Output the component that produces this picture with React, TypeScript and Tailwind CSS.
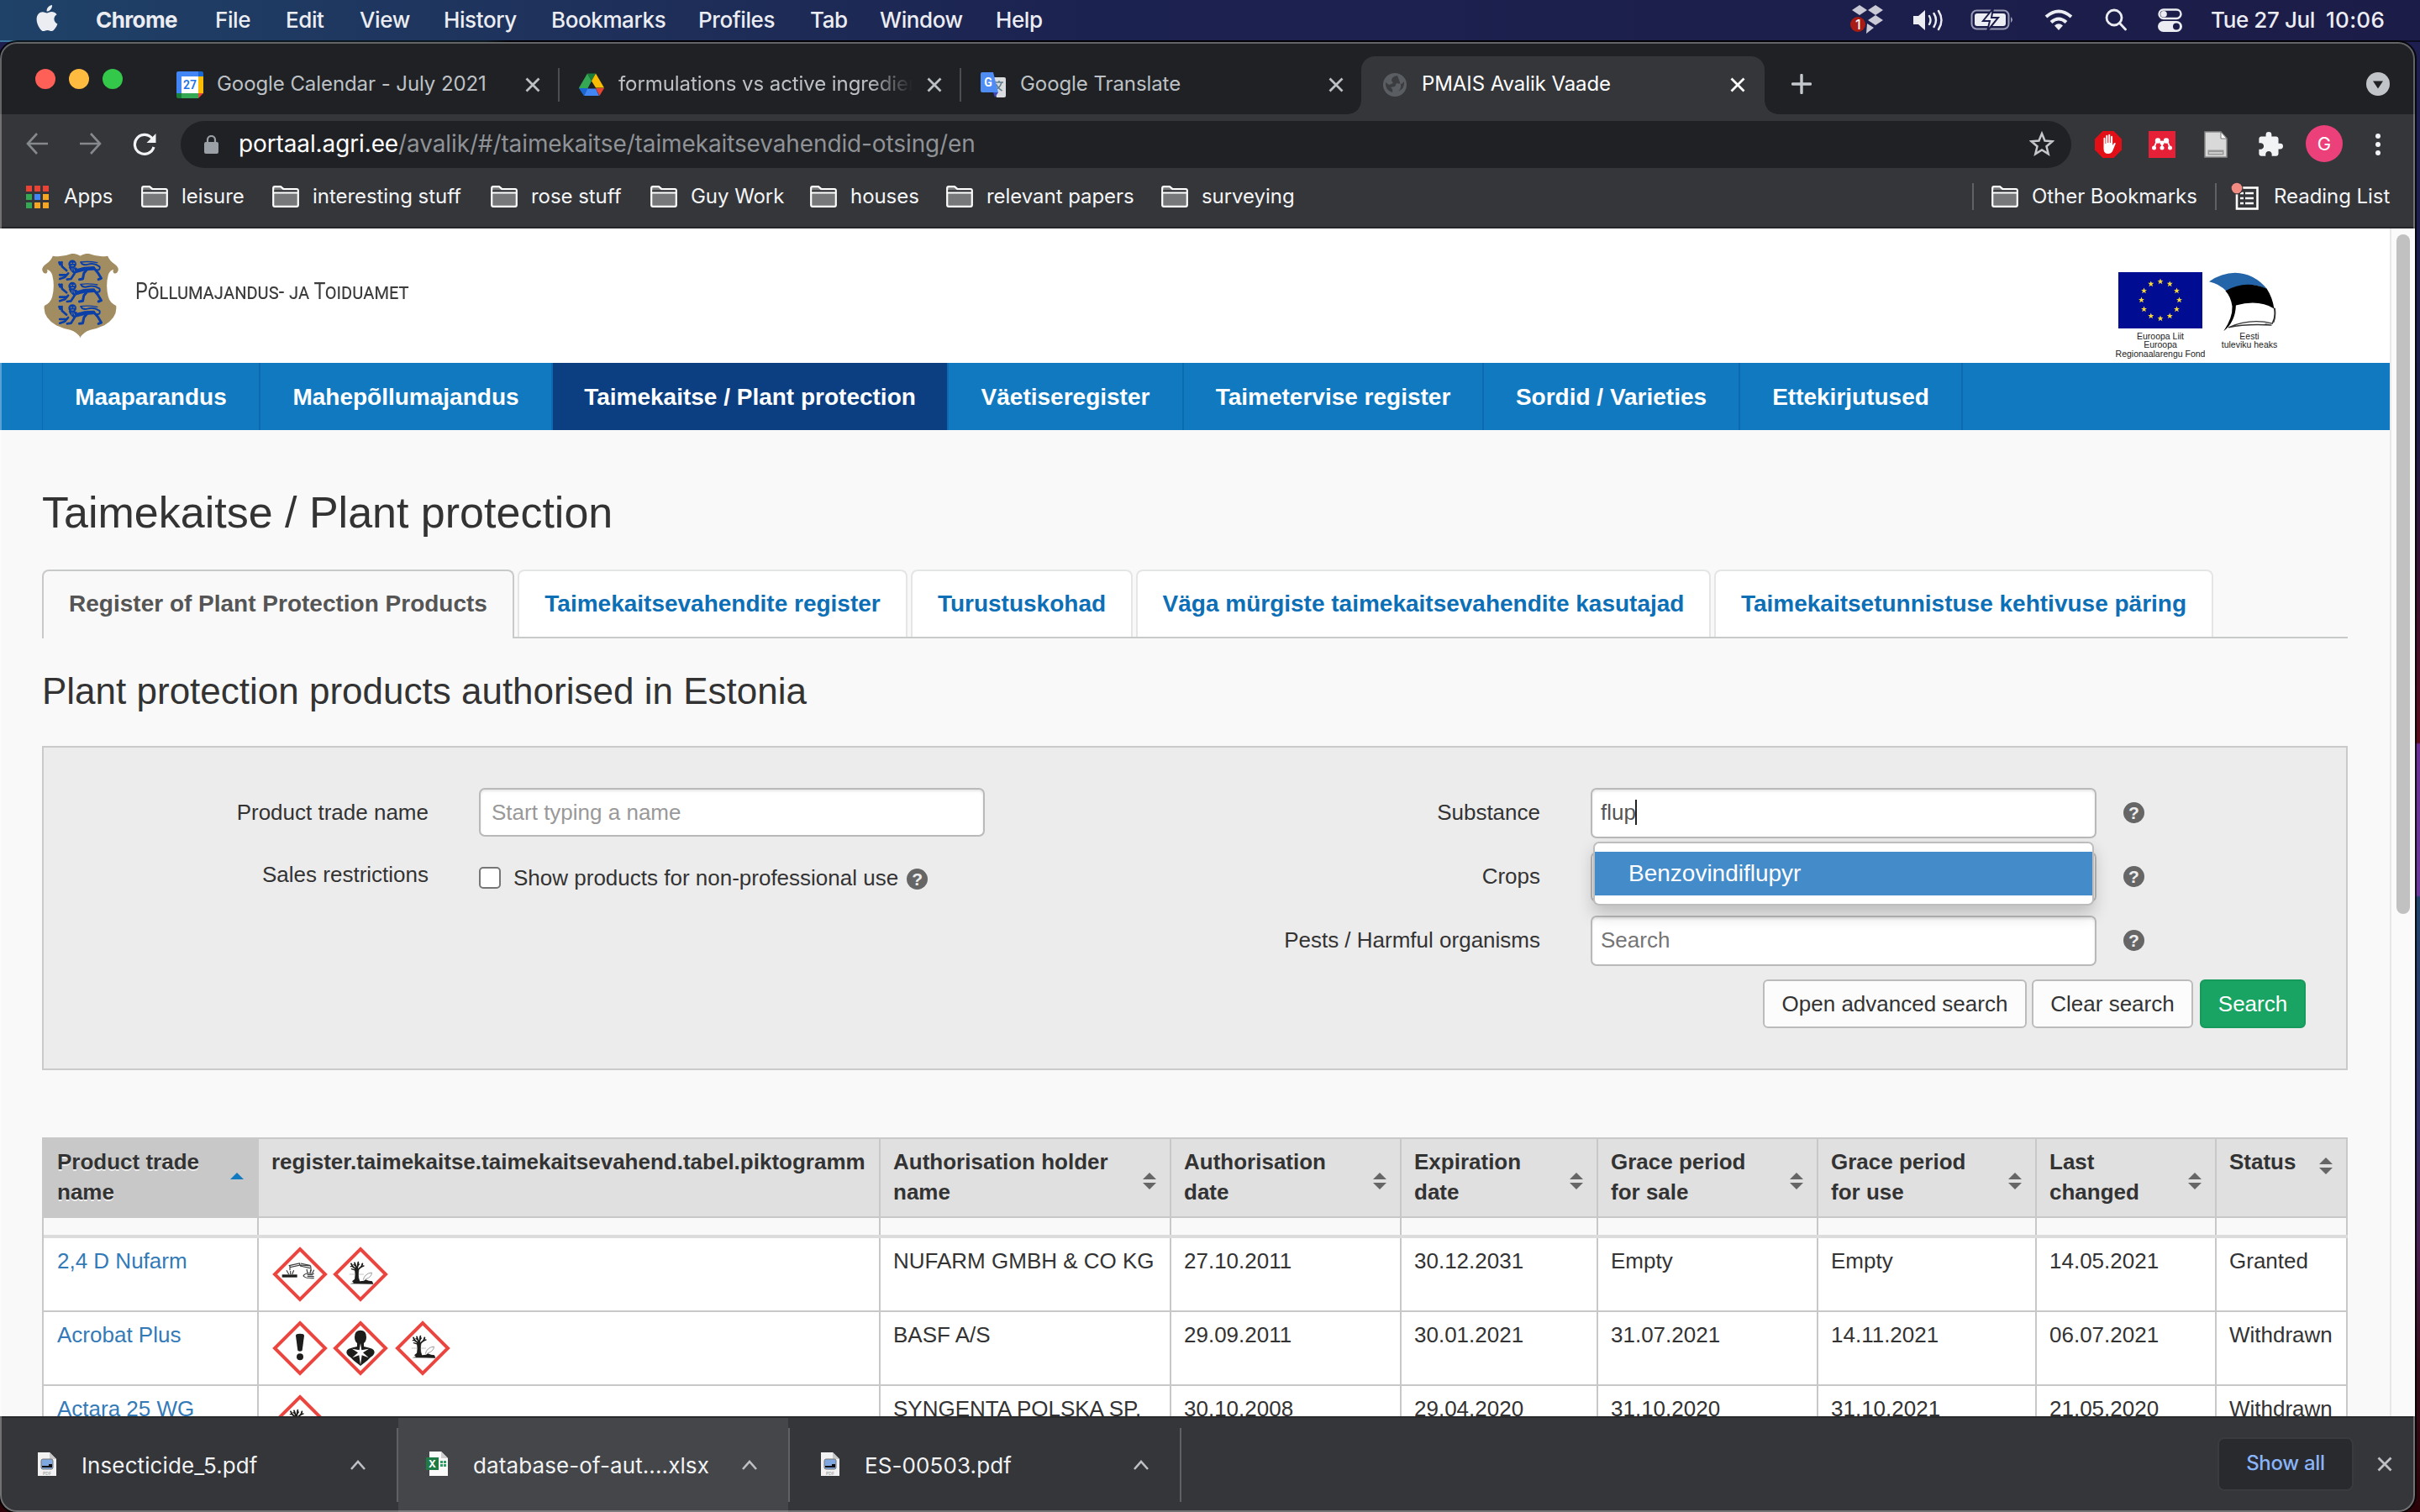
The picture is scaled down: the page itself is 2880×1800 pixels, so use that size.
import React from "react";

type Kids = { children?: React.ReactNode };

/* ---------- macOS menu bar ---------- */

const menus = [
  { label: "File", cls: "w-[84px]" },
  { label: "Edit", cls: "w-[88px]" },
  { label: "View", cls: "w-[100px]" },
  { label: "History", cls: "w-[128px]" },
  { label: "Bookmarks", cls: "w-[175px]" },
  { label: "Profiles", cls: "w-[133px]" },
  { label: "Tab", cls: "w-[83px]" },
  { label: "Window", cls: "w-[138px]" },
  { label: "Help", cls: "w-[80px]" },
];

function MenuBar() {
  return (
    <div className="flex h-12 items-center bg-linear-to-r from-[#1f4268] via-[#1c2250] via-45% to-[#1c1c48] pb-[1px] text-[26px] font-medium tracking-[-0.4px] text-[#ecedf2]">
      <svg className="-mt-1 mr-[44px] ml-[43px] h-8 w-[27px] shrink-0" viewBox="0 0 27 32" fill="#ecedf2">
        <path d="M19 0c.3 2-.5 3.900-1.700 5.300-1.200 1.400-3 2.400-4.700 2.300-.3-1.900.6-3.900 1.700-5.100C15.500 1.100 17.500.1 19 0z" />
        <path d="M24.600 11.200c-2 1.200-3.200 3-3.200 5.400 0 2.700 1.600 4.900 4 5.800-.6 1.800-1.500 3.500-2.600 5.100-1.300 1.800-2.500 3.600-4.500 3.600-1.900 0-2.500-1.200-4.800-1.200-2.200 0-3 1.200-4.800 1.200-1.900 0-3.200-1.700-4.600-3.700C1.900 24.300.6 20.500.6 17c0-5.500 3.500-8.800 7.200-8.800 2.100 0 3.800 1.300 5.100 1.300 1.200 0 3.200-1.400 5.600-1.400 2.300 0 4.500 1 6.100 3.100z" />
      </svg>
      <span className="w-[142px] font-bold tracking-[-0.6px]">Chrome</span>
      {menus.map((m) => (
        <span key={m.label} className={"shrink-0 whitespace-nowrap " + m.cls}>{m.label}</span>
      ))}
      <div className="ml-auto flex items-center pr-[35px]">
        <svg className="mr-[34px] h-10 w-[40px]" viewBox="0 0 40 40">
          <g fill="#c9cad6">
            <path d="M11 2l9 6-9 6-9-6zM30 2l9 6-9 6-9-6zM30 14l9 6-9 6-9-6zM20 24l8 5-9 7z" />
          </g>
          <circle cx="9" cy="25" r="9" fill="#a81c14" />
          <text x="9" y="31" textAnchor="middle" fontSize="16" fontFamily="Inter, sans-serif" fill="#fff">1</text>
        </svg>
        <svg className="mr-[31px] h-7 w-[38px]" viewBox="0 0 38 28" fill="none" stroke="#ecedf2" strokeWidth="2.400" strokeLinecap="round">
          <path d="M1 9h6l8-7v24l-8-7H1z" fill="#ecedf2" stroke="none" />
          <path d="M20 9q3 5 0 10M25.500 6q5 8 0 16M31 3q7 11 0 22" />
        </svg>
        <svg className="mr-[36px] h-7 w-[52px]" viewBox="0 0 52 28">
          <rect x="1.500" y="2.500" width="44" height="22" rx="6" fill="none" stroke="#9a9bb5" strokeWidth="2" />
          <rect x="5" y="6" width="37" height="15" rx="3" fill="#ecedf2" />
          <path d="M48 10q4 3.500 0 7z" fill="#9a9bb5" />
          <path d="M27 0L15 15h8l-3 12 13-16h-8z" fill="#ecedf2" stroke="#1c1c4a" strokeWidth="2" />
        </svg>
        <svg className="mr-[38px] h-7 w-[34px]" viewBox="0 0 34 28" fill="none" stroke="#ecedf2" strokeWidth="4">
          <path d="M2 10q15-13 30 0M8 16.500q9-8 18 0" />
          <path d="M17 26l-5-5.500q5-4.500 10 0z" fill="#ecedf2" stroke="none" />
        </svg>
        <svg className="mr-[37px] h-7 w-[26px]" viewBox="0 0 26 28" fill="none" stroke="#ecedf2" strokeWidth="2.800" strokeLinecap="round">
          <circle cx="11" cy="11" r="9" />
          <path d="M18 18l6.500 7" />
        </svg>
        <svg className="mr-[34px] h-7 w-[29px]" viewBox="0 0 29 28">
          <rect x="1.500" y="1.500" width="26" height="10.500" rx="5.250" fill="none" stroke="#ecedf2" strokeWidth="2.400" />
          <circle cx="7" cy="6.800" r="3.800" fill="#ecedf2" />
          <rect x="0" y="15" width="29" height="13" rx="6.500" fill="#ecedf2" />
          <circle cx="22" cy="21.500" r="4" fill="#1c1c4a" />
        </svg>
        <span className="w-[137px] whitespace-nowrap">Tue 27 Jul</span>
        <span className="w-[77px] whitespace-nowrap tracking-[0.3px]">10:06</span>
      </div>
    </div>
  );
}

/* ---------- Chrome window frame ---------- */

function Cross({ cls }: { cls: string }) {
  return (
    <svg className={"h-[18px] w-[18px] shrink-0 " + cls} viewBox="0 0 18 18" fill="none" stroke="currentColor" strokeWidth="2.800">
      <path d="M1.500 1.500l15 15M16.500 1.500l-15 15" />
    </svg>
  );
}

function TabStrip() {
  return (
    <div className="flex h-[86px] items-end bg-[#202124] text-[24px] tracking-[-0.08px] text-[#bdc1c6]">
      <div className="flex h-[84px] items-center gap-4 pr-[64px] pl-[42px]">
        <span className="h-6 w-6 rounded-full bg-[#fe5f57]" />
        <span className="h-6 w-6 rounded-full bg-[#febb40]" />
        <span className="h-6 w-6 rounded-full bg-[#34c84a]" />
      </div>
      <div className="flex h-[71px] w-[456px] shrink-0 items-center">
        <svg className="h-8 w-8 shrink-0" viewBox="0 0 32 32">
          <path d="M2 0h24v6H6v20H0V2q0-2 2-2z" fill="#4285f4" />
          <path d="M26 0h4q2 0 2 2v4h-6z" fill="#1967d2" />
          <path d="M26 6h6v20h-6z" fill="#fbbc04" />
          <path d="M6 26h20v6H6z" fill="#34a853" />
          <path d="M0 26h6v6H2q-2 0-2-2z" fill="#188038" />
          <path d="M26 26h6l-6 6z" fill="#ea4335" />
          <path d="M6 6h20v20H6z" fill="#fff" />
          <text x="16" y="21" textAnchor="middle" fontSize="14" fontWeight="600" fontFamily="Roboto, sans-serif" fill="#1a73e8">27</text>
        </svg>
        <span className="-mt-[2px] ml-4 w-[367px] whitespace-nowrap">Google Calendar - July 2021</span>
        <Cross cls="text-[#bdc1c6]" />
        <span className="ml-auto h-10 w-[2px] bg-[#4c4d51]" />
      </div>
      <div className="flex h-[71px] w-[478px] shrink-0 items-center pl-[23px]">
        <svg className="h-7 w-[30px] shrink-0" viewBox="0 0 30 27">
          <path d="M10 0h10l-5 9z" fill="#188038" />
          <path d="M10 0l5 9-9 17-6-9z" fill="#34a853" />
          <path d="M20 0l10 17h-10L15 9z" fill="#fbbc04" />
          <path d="M10 18h10l4 8.500H6z" fill="#4285f4" />
          <path d="M20 17.500h10l-5.500 9z" fill="#ea4335" />
          <path d="M0 17.500h10.500L6 26.500z" fill="#1967d2" />
        </svg>
        <span className="-mt-[2px] ml-[17px] w-[350px] overflow-hidden whitespace-nowrap [mask-image:linear-gradient(to_right,black_85%,transparent)]">
          formulations vs active ingredients
        </span>
        <Cross cls="ml-[17px] text-[#bdc1c6]" />
        <span className="ml-auto h-10 w-[2px] bg-[#4c4d51]" />
      </div>
      <div className="flex h-[71px] w-[476px] shrink-0 items-center pl-[23px]">
        <svg className="h-8 w-[30px] shrink-0" viewBox="0 0 30 32">
          <path d="M12 7h16q2 0 2 2v20q0 2-2 2H19z" fill="#dadce0" />
          <path d="M17 13h10M22 11v2M25 13q-2 7-8 9M18.500 15q2 5 7 8" stroke="#607d8b" strokeWidth="1.500" fill="none" />
          <path d="M2 1h13l6 24H2q-2 0-2-2V3q0-2 2-2z" fill="#4f8df5" />
          <path d="M15 25h6l-4 6z" fill="#3b4ab8" />
          <text x="9" y="18" textAnchor="middle" fontSize="14" fontWeight="700" fontFamily="Roboto, sans-serif" fill="#fff">G</text>
        </svg>
        <span className="-mt-[2px] ml-[17px] w-[367px] whitespace-nowrap">Google Translate</span>
        <Cross cls="text-[#bdc1c6]" />
      </div>
      <div className="relative flex h-[69px] w-[480px] shrink-0 items-center rounded-t-[16px] bg-[#35363a] pl-[26px] text-white">
        <span className="absolute bottom-0 -left-4 h-4 w-4 bg-[radial-gradient(circle_at_0_0,transparent_15.500px,#35363a_16px)]" />
        <span className="absolute -right-4 bottom-0 h-4 w-4 bg-[radial-gradient(circle_at_100%_0,transparent_15.500px,#35363a_16px)]" />
        <svg className="-mt-[2px] h-7 w-7 shrink-0" viewBox="0 0 28 28">
          <circle cx="14" cy="14" r="14" fill="#5a5d61" />
          <path d="M17 3q-7 1-7 6l2 3-5 2-4-3q-1 9 8 12 1-4-2-6l5-1 2-4 6 1 3-3q1 9-8 12 5-3 4-8z" fill="#3b3c40" />
        </svg>
        <span className="-mt-[3px] ml-[18px] w-[367px] whitespace-nowrap">PMAIS Avalik Vaade</span>
        <Cross cls="-mt-[1px] text-white" />
      </div>
      <svg className="mb-[24px] ml-[32px] h-6 w-6" viewBox="0 0 24 24" stroke="#c4c7cb" strokeWidth="3.400" strokeLinecap="round">
        <path d="M12 1.500v21M1.500 12h21" />
      </svg>
      <svg className="mr-[30px] mb-[22px] ml-auto h-7 w-7" viewBox="0 0 28 28">
        <circle cx="14" cy="14" r="14" fill="#c1c4c8" />
        <path d="M8 10.500h12l-6 9z" fill="#202124" />
      </svg>
    </div>
  );
}

function Toolbar() {
  return (
    <div className="flex h-[64px] items-center bg-[#35363a] pt-2">
      <svg className="-mt-[2px] ml-[31px] h-[26px] w-[26px]" viewBox="0 0 26 26" fill="none" stroke="#85888c" strokeWidth="2.600">
        <path d="M13 1L2 13l11 12M2 13h24" />
      </svg>
      <svg className="-mt-[2px] ml-[38px] h-[26px] w-[26px]" viewBox="0 0 26 26" fill="none" stroke="#85888c" strokeWidth="2.600">
        <path d="M13 1l11 12-11 12M24 13H0" />
      </svg>
      <svg className="ml-[37px] h-[28px] w-[28px]" viewBox="0 0 28 28" fill="none" stroke="#f1f3f4" strokeWidth="3.200">
        <path d="M23.500 7.500A11.500 11.500 0 1 0 25 17" />
        <path d="M27.500 1v11h-11z" fill="#f1f3f4" stroke="none" />
      </svg>
      <div className="ml-[29px] flex h-14 w-[2250px] shrink-0 items-center rounded-full bg-[#202124] pl-[28px] text-[28px] tracking-[-0.12px] text-[#8f9296]">
        <svg className="mr-[24px] h-[22px] w-[17px] shrink-0" viewBox="0 0 17 22">
          <rect x="0" y="8" width="17" height="14" rx="2" fill="#9aa0a6" />
          <path d="M4 9V5.500a4.500 4.500 0 0 1 9 0V9" fill="none" stroke="#9aa0a6" strokeWidth="2.200" />
        </svg>
        <span className="-mt-[3px] whitespace-nowrap">
          <span className="text-white">portaal.agri.ee</span>/avalik/#/taimekaitse/taimekaitsevahendid-otsing/en
        </span>
        <svg className="-mt-[3px] mr-[20px] ml-auto h-[30px] w-[30px]" viewBox="0 0 30 30" fill="none" stroke="#c4c7cb" strokeWidth="2.500">
          <path d="M15 3l3.500 8.500 9 .7-7 6 2.200 9L15 22.400l-7.700 4.800 2.200-9-7-6 9-.7z" />
        </svg>
      </div>
      <svg className="-mt-[1px] ml-[28px] h-8 w-8 shrink-0" viewBox="0 0 32 32">
        <path d="M9.500 0h13L32 9.500v13L22.500 32h-13L0 22.500v-13z" fill="#e30f17" />
        <path d="M10.500 8q1.800-1 2 1v6h.8V5.500q1-1.500 2 0V14h.9V4.500q1-1.500 2 0V14h.9V6.500q1-1.500 2 0V17l1.700-2.500q1.400-1 2 0.300L21.500 23q-1.500 4-5.500 4-5.500 0-5.500-6z" fill="#fff" />
      </svg>
      <svg className="-mt-[1px] ml-8 h-8 w-8 shrink-0" viewBox="0 0 32 32">
        <path d="M0 0h32v32H0z" fill="#e62137" />
        <g fill="#fff">
          <circle cx="11" cy="11.500" r="3.200" /><circle cx="21" cy="11.500" r="3.200" /><circle cx="16" cy="14" r="2.600" />
          <circle cx="6.500" cy="20" r="2.500" /><circle cx="16" cy="20" r="2.500" /><circle cx="25.500" cy="20" r="2.500" />
        </g>
        <path d="M10 11L6.500 20M22 11l3.500 9M16 14v6M11 11l5 3 5-3" stroke="#fff" strokeWidth="1.800" fill="none" />
      </svg>
      <svg className="-mt-[1px] ml-[34px] h-8 w-7 shrink-0" viewBox="0 0 28 32">
        <path d="M1 1h19l7 8v22H1z" fill="#d9d9d9" stroke="#8a8a8a" strokeWidth="1.500" />
        <path d="M20 1v8h7z" fill="#fff" stroke="#777" />
        <path d="M4.500 22.500h19v6h-19z" fill="#999" /><path d="M6 25h16v2H6z" fill="#ccc" />
      </svg>
      <svg className="-mt-[1px] ml-[36px] h-[30px] w-[30px] shrink-0" viewBox="1 1 22 22" fill="#f1f3f4">
        <path d="M20.500 11H19V7c0-1.100-.9-2-2-2h-4V3.500a2.500 2.500 0 0 0-5 0V5H4c-1.100 0-2 .9-2 2v3.800h1.500c1.500 0 2.700 1.200 2.700 2.700S5 16.200 3.500 16.200H2V20c0 1.100.9 2 2 2h3.800v-1.500c0-1.500 1.200-2.700 2.700-2.700s2.700 1.200 2.700 2.700V22H17c1.100 0 2-.9 2-2v-4h1.500a2.500 2.500 0 0 0 0-5z" />
      </svg>
      <span className="-mt-[2px] ml-[27px] flex h-11 w-11 shrink-0 items-center justify-center rounded-full bg-[#ec407a] text-[22px] text-white">G</span>
      <div className="-mt-[1px] ml-[39px] flex flex-col gap-[4px]">
        <span className="h-[6px] w-[6px] rounded-full bg-[#f1f3f4]" />
        <span className="h-[6px] w-[6px] rounded-full bg-[#f1f3f4]" />
        <span className="h-[6px] w-[6px] rounded-full bg-[#f1f3f4]" />
      </div>
    </div>
  );
}

function Folder() {
  return (
    <svg className="mr-[16px] h-[26px] w-8 shrink-0" viewBox="0 0 32 26">
      <path d="M1.200 3q0-1.800 1.800-1.800h7l3.500 3H29q1.800 0 1.800 1.800v17q0 1.800-1.800 1.800H3q-1.800 0-1.800-1.800z" fill="#77787a" stroke="#fff" strokeWidth="2.200" />
      <path d="M2.200 5.300h27.400v3H2.200z" fill="#35363a" />
      <path d="M1 8.500h30" stroke="#fff" strokeWidth="2" />
    </svg>
  );
}

const bookmarks = [
  { label: "leisure", cls: "w-[156px]" },
  { label: "interesting stuff", cls: "w-[260px]" },
  { label: "rose stuff", cls: "w-[190px]" },
  { label: "Guy Work", cls: "w-[190px]" },
  { label: "houses", cls: "w-[162px]" },
  { label: "relevant papers", cls: "w-[256px]" },
  { label: "surveying", cls: "w-[200px]" },
];

const appDots = [
  "bg-[#ea4335]", "bg-[#ea4335]", "bg-[#ea4335]",
  "bg-[#34a853]", "bg-[#4285f4]", "bg-[#f5a623]",
  "bg-[#34a853]", "bg-[#f5a623]", "bg-[#f5a623]",
];

function BookmarksBar() {
  return (
    <div className="flex h-[72px] items-center border-b-2 border-[#242528] bg-[#35363a] pb-[2px] text-[24px] tracking-[-0.05px] text-[#f4f5f6]">
      <div className="mr-[18px] ml-[31px] grid grid-cols-3 gap-[3px]">
        {appDots.map((c, i) => (
          <span key={i} className={"h-[7px] w-[7px] " + c} />
        ))}
      </div>
      <span className="w-[92px]">Apps</span>
      {bookmarks.map((b) => (
        <div key={b.label} className={"flex shrink-0 items-center whitespace-nowrap " + b.cls}>
          <Folder />
          {b.label}
        </div>
      ))}
      <span className="mr-[21px] ml-auto h-8 w-[2px] bg-[#5f6165]" />
      <Folder />
      <span className="w-[218px] whitespace-nowrap">Other Bookmarks</span>
      <span className="mr-[17px] h-8 w-[2px] bg-[#5f6165]" />
      <svg className="mr-[17px] h-[34px] w-[34px]" viewBox="0 0 34 34">
        <rect x="7" y="6.500" width="24.500" height="25" fill="none" stroke="#fff" strokeWidth="2.600" />
        <path d="M11 13h4M17 13h10M11 19h4M17 19h10M11 25h4M17 25h10" stroke="#fff" strokeWidth="2.600" />
        <circle cx="7" cy="7" r="7.500" fill="#35363a" />
        <circle cx="7" cy="7" r="6.300" fill="#f28b82" />
      </svg>
      <span className="w-[168px] whitespace-nowrap">Reading List</span>
    </div>
  );
}

/* ---------- page header ---------- */

function Lion({ y }: { y: number }) {
  return (
    <g transform={"translate(85 " + y + ")"} fill="none" stroke="#0b3fa8" strokeLinecap="round" strokeLinejoin="round">
      <path d="M6 8l8 0 2 14 16 14" strokeWidth="8" />
      <path d="M6 6l2 10M16 6l-3 10" strokeWidth="6" />
      <circle cx="53" cy="13" r="12" fill="#0b3fa8" strokeWidth="5" />
      <path d="M47 10h4M57 10h4M50 19h7" stroke="#a28d63" strokeWidth="3" />
      <path d="M42 24q4 12 18 22l8-18z" fill="#0b3fa8" strokeWidth="4" />
      <path d="M66 38l30-8 32-2" strokeWidth="14" />
      <path d="M38 46L26 60 8 66M8 52l22 0M62 44L48 66 34 68" strokeWidth="8" />
      <path d="M104 34l-10 12-4 20-12 2M132 30l12 14 12 20-10 4" strokeWidth="9" />
      <path d="M84 8q6 12 26 6t40 8q4 14-10 12" strokeWidth="6" />
      <path d="M82 6q30-4 60 2" strokeWidth="4" />
      <path d="M52 28v8M58 30l3 8" stroke="#a28d63" strokeWidth="2" />
    </g>
  );
}

const halfShield =
  "M167 44Q150 34 135 36Q100 50 68 44Q62 60 45 72Q30 82 30 94Q34 110 46 106Q52 98 46 92Q60 94 66 112Q76 150 66 190Q60 212 38 222Q32 262 80 292Q105 304 130 308Q155 316 167 336z";

function Emblem() {
  return (
    <svg className="h-[100px] w-[91px]" viewBox="30 36 272 300">
      <path d={halfShield} fill="#a28d63" />
      <path d={halfShield} fill="#a28d63" transform="translate(332 0) scale(-1 1)" />
      <Lion y={60} />
      <Lion y={139} />
      <Lion y={218} />
    </svg>
  );
}

function EuFlag() {
  const stars = Array.from({ length: 12 }, (_, i) => {
    const a = (i * Math.PI) / 6;
    return { x: 50 + 22.500 * Math.sin(a), y: 33 - 22 * Math.cos(a) };
  });
  return (
    <svg className="h-[67px] w-[100px] shrink-0" viewBox="0 0 100 67">
      <path d="M0 0h100v67H0z" fill="#000c92" />
      {stars.map((s, i) => (
        <path key={i} transform={"translate(" + s.x + " " + s.y + ")"} d="M0-3.500l1 2.400h2.500l-2 1.700.8 2.600L0 1.800l-2.300 1.400.8-2.600-2-1.700H-1z" fill="#f4d53a" />
      ))}
    </svg>
  );
}

function EstoniaMark() {
  return (
    <svg className="h-[71px] w-[80px] shrink-0" viewBox="888 160 218 216" preserveAspectRatio="none">
      <path d="M888 194q40-32 85-32 62 2 104 60-60-34-134 6-22-26-55-34z" fill="#2464a8" />
      <path d="M941 228q64-42 134-8 18 30 24 72-50-34-124-12-2 60-40 94 30-50 28-90-4-34-22-56z" fill="#000" />
      <path d="M1099 290q6 30-6 56-70-20-142 14 60-14 140-8l-22-4M1101 290q4 30-4 52" fill="none" stroke="#333" strokeWidth="4" />
    </svg>
  );
}

function SiteHeader() {
  return (
    <header className="flex h-[160px] shrink-0 bg-white pt-[30px] pl-[50px]">
      <Emblem />
      <div className="mt-[26px] ml-[20px] h-8 w-[328px]">
        <span className="inline-block origin-left scale-x-[0.865] whitespace-nowrap font-[Roboto,sans-serif] text-[27px] leading-8 text-[#3c3c3c] [font-variant-caps:small-caps]">
          Põllumajandus- ja Toiduamet
        </span>
      </div>
      <div className="mt-[22px] mr-[134px] ml-auto flex gap-[6px] text-center font-[Liberation_Sans,sans-serif] text-[10.500px] leading-[10.300px] text-[#222]">
        <div className="flex w-[102px] flex-col items-center whitespace-nowrap">
          <EuFlag />
          <span className="mt-[4px]">Euroopa Liit</span>
          <span>Euroopa</span>
          <span>Regionaalarengu Fond</span>
        </div>
        <div className="flex w-[82px] flex-col items-center whitespace-nowrap">
          <EstoniaMark />
          <span className="ml-4">Eesti</span>
          <span className="ml-4">tuleviku heaks</span>
        </div>
      </div>
    </header>
  );
}

const sections = [
  { label: "Maaparandus", cls: "w-[259px]" },
  { label: "Mahepõllumajandus", cls: "w-[348px]" },
  { label: "Taimekaitse / Plant protection", cls: "w-[471px] bg-[#0b3f82]" },
  { label: "Väetiseregister", cls: "w-[280px]" },
  { label: "Taimetervise register", cls: "w-[357px]" },
  { label: "Sordid / Varieties", cls: "w-[305px]" },
  { label: "Ettekirjutused", cls: "w-[265px]" },
];

function SectionNav() {
  return (
    <nav className="flex h-20 shrink-0 bg-[#1179bf] pl-[50px] text-[28px] font-bold text-white">
      <span className="w-[1px] bg-[#0d69b0]" />
      {sections.map((s) => (
        <div key={s.label} className={"flex items-center justify-center whitespace-nowrap border-r-2 border-[#0d69b0] pt-[1px] " + s.cls}>
          {s.label}
        </div>
      ))}
    </nav>
  );
}

/* ---------- tabs and filter form ---------- */

const pageTabs = [
  { label: "Taimekaitsevahendite register", cls: "w-[464px]" },
  { label: "Turustuskohad", cls: "w-[264px]" },
  { label: "Väga mürgiste taimekaitsevahendite kasutajad", cls: "w-[684px]" },
  { label: "Taimekaitsetunnistuse kehtivuse päring", cls: "w-[594px]" },
];

function PageTabs() {
  return (
    <div className="flex h-[82px] text-[28px] font-bold">
      <div className="flex w-[562px] items-center justify-center whitespace-nowrap rounded-t-[8px] border-2 border-b-0 border-[#c8caca] pb-[3px] text-[#555]">
        Register of Plant Protection Products
      </div>
      <div className="flex grow gap-1 border-b-2 border-[#c8caca] pl-1">
        {pageTabs.map((t) => (
          <div key={t.label} className={"flex items-center justify-center whitespace-nowrap rounded-t-[8px] border-2 border-b-0 border-[#e4e6e6] bg-white pb-[1px] text-[#0d6fb5] " + t.cls}>
            {t.label}
          </div>
        ))}
      </div>
    </div>
  );
}

function Help({ cls }: { cls: string }) {
  return (
    <span className={"flex h-[25px] w-[25px] shrink-0 items-center justify-center rounded-full bg-[#666] text-[21px] leading-none font-bold text-[#eee] " + cls}>?</span>
  );
}

function Label({ children }: Kids) {
  return <span className="mr-[60px] grow text-right leading-[58px]">{children}</span>;
}

const field =
  "relative h-[60px] w-[602px] shrink-0 rounded-[7px] border-2 border-[#b9b9b9] bg-white pl-[10px] text-left leading-[55px] shadow-[inset_0_2px_3px_rgba(0,0,0,0.1)]";

function FilterPanel() {
  return (
    <section className="flex h-[386px] flex-col border-2 border-[#cacaca] bg-[#ececec] pt-[48px]">
      <div className="flex">
        <div className="flex w-[1120px] shrink-0 flex-col">
          <div className="flex">
            <Label>Product trade name</Label>
            <div className="h-[58px] w-[602px] shrink-0 rounded-[7px] border-2 border-[#b9b9b9] bg-white pl-[13px] leading-[54px] text-[#999] shadow-[inset_0_2px_3px_rgba(0,0,0,0.1)]">
              Start typing a name
            </div>
          </div>
          <div className="mt-[16px] flex">
            <Label>Sales restrictions</Label>
            <div className="flex h-[66px] w-[602px] shrink-0 items-center">
              <span className="mr-[15px] h-[26px] w-[26px] rounded-[5px] border-2 border-[#767676] bg-white" />
              <span>Show products for non-professional use</span>
              <Help cls="mt-[2px] ml-[10px]" />
            </div>
          </div>
        </div>
        <div className="flex w-[1380px] flex-col gap-4">
          <div className="flex">
            <Label>Substance</Label>
            <div className={field + " text-[#555]"}>
              flup<span className="-ml-[1px] inline-block h-[30px] w-[2px] bg-[#222] align-[-6px]" />
              <div className="absolute top-[62px] left-[1px] z-10 h-[76px] w-[596px] rounded-[7px] border-2 border-[#bdbdbd] bg-white py-[10px] shadow-[0_10px_20px_rgba(0,0,0,0.2)]">
                <div className="h-[52px] bg-[#448bca] pl-[40px] text-[28px] leading-[52px] text-white">Benzovindiflupyr</div>
              </div>
            </div>
            <Help cls="mt-[17px] ml-[32px]" />
          </div>
          <div className="flex">
            <Label>Crops</Label>
            <div className={field} />
            <Help cls="mt-[17px] ml-[32px]" />
          </div>
          <div className="flex">
            <Label>Pests / Harmful organisms</Label>
            <div className={field + " text-[#757575]"}>Search</div>
            <Help cls="mt-[17px] ml-[32px]" />
          </div>
        </div>
      </div>
      <div className="mt-4 mr-[48px] flex justify-end leading-[54px]">
        <div className="h-[58px] w-[314px] rounded-[6px] border-2 border-[#bbb] bg-[#fcfcfc] text-center">Open advanced search</div>
        <div className="ml-[6px] h-[58px] w-[192px] rounded-[6px] border-2 border-[#bbb] bg-[#fcfcfc] text-center">Clear search</div>
        <div className="ml-[8px] h-[58px] w-[126px] rounded-[6px] border-2 border-[#159a5b] bg-[#19a463] text-center text-white">Search</div>
      </div>
    </section>
  );
}

/* ---------- hazard pictograms ---------- */

function Diamond({ cls, children }: Kids & { cls: string }) {
  return (
    <svg className={"h-[66px] w-[66px] shrink-0 " + cls} viewBox="-99 -99 198 198">
      <path d="M0-90L90 0 0 90-90 0z" fill="#fff" stroke="#ea463f" strokeWidth="12" />
      {children}
    </svg>
  );
}

function Environment({ cls }: { cls: string }) {
  return (
    <Diamond cls={cls}>
      <path d="M-40 0h28M-8 0h20" stroke="#aaa" strokeWidth="2" />
      <path d="M10 20q4-22 30-26 2 14-22 24" stroke="#888" strokeWidth="2.500" fill="#fff" />
      <g fill="none" stroke="#1d1d1b" strokeLinecap="round">
        <path d="M-20 20q4-20 0-38h14q-4 18 0 38z" fill="#1d1d1b" strokeWidth="2" strokeLinecap="butt" />
        <path d="M-14-16l-14-12-5-10M-14-20l-7-21M-12-20l4-23M-10-16l14-12 3-10" strokeWidth="5.500" />
        <path d="M-28-28h-7M3-27l9-3M-18-31l-6-3M-10-30l5-6M-16-14l-16-5" strokeWidth="4" />
      </g>
      <path d="M-38 34l14-3-6-6 12-10h12l4 10 14-2 6-4 12 4 12 2 4 10z" fill="#1d1d1b" />
    </Diamond>
  );
}

function Corrosive({ cls }: { cls: string }) {
  return (
    <Diamond cls={cls}>
      <path d="M-64 1h54v10h-54z" fill="#1d1d1b" />
      <g fill="none" stroke="#3c3c3c" strokeWidth="3.500">
        <path d="M-38-31l36-8 2 6-34 8zM38-31L2-39M-36-28v14M38-30L2-33M38-30l2 20M36-22l-36-8" />
        <path d="M-40 0l-8-14M-34 0l0-12M-28 0l6-14M28-2l-4-16M36-2l2-14M44-4l6-12" />
        <path d="M50-2q-32-6-38 8 8 10 38 8M26 2h20M26 8h24" />
      </g>
    </Diamond>
  );
}

function Exclamation({ cls }: { cls: string }) {
  return (
    <Diamond cls={cls}>
      <path d="M-15-45q0-7 15-7t15 7L8 8q-8 6-16 0z" fill="#1d1d1b" />
      <circle cx="0" cy="31" r="12" fill="#1d1d1b" />
    </Diamond>
  );
}

function HealthHazard({ cls }: { cls: string }) {
  return (
    <Diamond cls={cls}>
      <path d="M0-64q21 0 21 24 0 14-9 22v12q16 4 30 8 8 4 8 12-1 10-14 18L24 44 0 63l-24-19-12-12q-13-8-14-18 0-8 8-12 14-4 30-8v-12q-9-8-9-22 0-24 21-24z" fill="#1d1d1b" />
      <path d="M0-18l4 25L30 2 9 16l20 18L5 25 0 60l-5-35-24 9 20-18L-30 2l26 5z" fill="#fff" />
    </Diamond>
  );
}

/* ---------- product table ---------- */

const cols =
  "grid grid-cols-[256px_740px_346px_274px_234px_262px_260px_214px_156px]";

function Up({ color }: { color: string }) {
  return (
    <svg className="h-2 w-4" viewBox="0 0 16 8"><path d="M8 0l8 8H0z" fill={color} /></svg>
  );
}

function SortArrows({ one }: { one?: boolean }) {
  return (
    <div className={"absolute right-[16px] flex flex-col gap-1 " + (one ? "top-[22px]" : "top-[40px]")}>
      <Up color="#666" />
      <svg className="h-2 w-4" viewBox="0 0 16 8"><path d="M8 8L0 0h16z" fill="#666" /></svg>
    </div>
  );
}

const headers: string[][] = [
  ["Authorisation holder", "name"],
  ["Authorisation", "date"],
  ["Expiration", "date"],
  ["Grace period", "for sale"],
  ["Grace period", "for use"],
  ["Last", "changed"],
  ["Status"],
];

const rows = [
  {
    name: "2,4 D Nufarm",
    icons: <><Corrosive cls="" /><Environment cls="ml-[6px]" /></>,
    cells: ["NUFARM GMBH & CO KG", "27.10.2011", "30.12.2031", "Empty", "Empty", "14.05.2021", "Granted"],
  },
  {
    name: "Acrobat Plus",
    icons: <><Exclamation cls="" /><HealthHazard cls="ml-[6px]" /><Environment cls="ml-[8px]" /></>,
    cells: ["BASF A/S", "29.09.2011", "30.01.2021", "31.07.2021", "14.11.2021", "06.07.2021", "Withdrawn"],
  },
  {
    name: "Actara 25 WG",
    icons: <Environment cls="" />,
    cells: ["SYNGENTA POLSKA SP.", "30.10.2008", "29.04.2020", "31.10.2020", "31.10.2021", "21.05.2020", "Withdrawn"],
  },
];

function ProductTable() {
  return (
    <div className="w-[2744px] shrink-0 border-t-2 border-l-2 border-[#c8c8c8] leading-9">
      <div className={cols + " h-[94px] border-b-2 border-[#c8c8c8] bg-[#e0e0e0] font-bold"}>
        <div className="relative border-r-2 border-[#c8c8c8] bg-[#c8c8c8] pt-[9px] pl-4 [text-shadow:0_2px_0_#eee]">
          Product trade<br />name
          <div className="absolute top-[40px] right-[16px] flex"><Up color="#1179bf" /></div>
        </div>
        <div className="border-r-2 border-[#c8c8c8] pt-[9px] pl-[15px]">register.taimekaitse.taimekaitsevahend.tabel.piktogramm</div>
        {headers.map((h, i) => (
          <div key={i} className="relative border-r-2 border-[#c8c8c8] pt-[9px] pl-[15px] whitespace-nowrap">
            {h[0]}<br />{h[1]}
            <SortArrows one={h.length === 1} />
          </div>
        ))}
      </div>
      <div className={cols + " h-[24px] border-b-4 border-[#dcdcdc]"}>
        {Array.from({ length: 9 }, (_, i) => (
          <div key={i} className="border-r-2 border-[#c8c8c8]" />
        ))}
      </div>
      {rows.map((r) => (
        <div key={r.name} className={cols + " h-[88px] border-b-2 border-[#c8c8c8] bg-white"}>
          <div className="border-r-2 border-[#c8c8c8] pt-[9px] pl-4 text-[#337ab7]">{r.name}</div>
          <div className="flex border-r-2 border-[#c8c8c8] pt-[10px] pl-4">{r.icons}</div>
          {r.cells.map((c, i) => (
            <div key={i} className="border-r-2 border-[#c8c8c8] pt-[9px] pl-[15px] whitespace-nowrap">{c}</div>
          ))}
        </div>
      ))}
    </div>
  );
}

/* ---------- downloads shelf ---------- */

function PdfIcon() {
  return (
    <svg className="-mt-[2px] h-7 w-[22px] shrink-0" viewBox="0 0 22 28">
      <path d="M0 0h14l8 8v20H0z" fill="#f2f2f2" />
      <path d="M14 0v8h8z" fill="#c8c8c8" />
      <rect x="4" y="8" width="14" height="12" rx="2" fill="#7fa7e0" stroke="#777" strokeWidth="1" />
      <path d="M5 16h8v-2h4v4H5z" fill="#111" />
      <text x="11" y="26.500" textAnchor="middle" fontSize="5" fontFamily="Inter, sans-serif" fill="#888">PDF</text>
    </svg>
  );
}

function XlsIcon() {
  return (
    <svg className="-mt-[4px] h-[29px] w-[26px] shrink-0" viewBox="0 0 26 29">
      <path d="M4 0h14l8 8v21H4z" fill="#fafafa" />
      <path d="M18 0v8h8z" fill="#cfcfcf" />
      <path d="M17 11h3v3h-3zM21 11h3v3h-3zM17 15h3v3h-3zM21 15h3v3h-3z" fill="#2f9e63" />
      <path d="M0 7h15v15H0z" fill="#1e7b45" />
      <text x="7.500" y="19" textAnchor="middle" fontSize="12" fontWeight="700" fontFamily="Inter, sans-serif" fill="#fff">X</text>
    </svg>
  );
}

function CaretUp({ cls }: { cls: string }) {
  return (
    <svg className={"ml-auto h-[12px] w-[18px] " + cls} viewBox="0 0 18 12" fill="none" stroke="#bdc1c6" strokeWidth="2.600">
      <path d="M1 11l8-9 8 9" />
    </svg>
  );
}

function Shelf() {
  return (
    <div className="flex h-[114px] shrink-0 items-center border-t-2 border-[#28292b] bg-[#35363a] text-[26px] tracking-[0.1px] text-[#f1f3f4]">
      <div className="flex w-[472px] items-center pl-[45px]">
        <PdfIcon /><span className="ml-[30px]">Insecticide_5.pdf</span><CaretUp cls="mr-[37px]" />
      </div>
      <span className="h-[88px] w-[2px] bg-[#5f6165]" />
      <div className="flex h-full w-[464px] items-center bg-[#454649] pl-[33px]">
        <XlsIcon /><span className="ml-[30px]">database-of-aut....xlsx</span><CaretUp cls="mr-[37px]" />
      </div>
      <span className="h-[88px] w-[2px] bg-[#5f6165]" />
      <div className="flex w-[464px] items-center pl-[37px]">
        <PdfIcon /><span className="ml-[30px]">ES-00503.pdf</span><CaretUp cls="mr-[37px]" />
      </div>
      <span className="h-[88px] w-[2px] bg-[#5f6165]" />
      <div className="-mt-[2px] ml-auto flex h-[64px] w-[162px] items-center justify-center rounded-[8px] border-2 border-[#3a3b3f] bg-[#292a2d] pb-[2px] text-[24px] font-medium tracking-[-0.3px] text-[#8ab4f8]">
        Show all
      </div>
      <Cross cls="mr-[27px] ml-[28px] -mt-[2px] text-[#bdc1c6]" />
    </div>
  );
}

export default function App() {
  return (
    <div className="relative h-[1800px] w-[2880px] overflow-hidden bg-[linear-gradient(to_bottom,#1e1f50_0,#1b1c48_500px,#3a1030_700px,#5a0d1c_884px,#6b2f94_886px,#6b3a9c_1066px,#20446a_1068px,#33306a_1340px,#4a1f52_1480px,#35101c_1620px,#2a0208_1800px)] font-[Inter,sans-serif]">
      <MenuBar />
      <div className="h-[2px] bg-linear-to-r from-[#3b76a0] from-20% to-[#0c0d22] to-21%" />
      <div className="relative flex h-[1750px] w-[2874px] flex-col overflow-hidden rounded-[20px] bg-[#202124] shadow-[0_0_0_2px_rgba(0,0,0,0.8)]">
        <TabStrip />
        <Toolbar />
        <BookmarksBar />
        <div className="flex h-[1414px] shrink-0 overflow-hidden bg-[#f9f9f9]">
          <main className="flex w-[2844px] shrink-0 flex-col font-[Liberation_Sans,Arial,sans-serif] text-[26px] text-[#333]">
            <SiteHeader />
            <SectionNav />
            <div className="flex w-[2794px] flex-col pl-[50px]">
              <h1 className="mt-[66px] h-[64px] text-[52px] leading-[64px]">Taimekaitse / Plant protection</h1>
              <div className="mt-[36px]"><PageTabs /></div>
              <h2 className="mt-[38px] mb-[40px] h-[50px] text-[44px] leading-[50px]">Plant protection products authorised in Estonia</h2>
              <FilterPanel />
              <div className="h-[80px]" />
              <ProductTable />
            </div>
          </main>
          <div className="w-[30px] shrink-0 border-l-2 border-[#e8e8e8] bg-[#fafafa] pt-[7px] pl-[6px]">
            <div className="h-[809px] w-4 rounded-full bg-[#c1c1c1]" />
          </div>
        </div>
        <Shelf />
        <div className="pointer-events-none absolute inset-0 rounded-[20px] border-2 border-white/30" />
      </div>
    </div>
  );
}
